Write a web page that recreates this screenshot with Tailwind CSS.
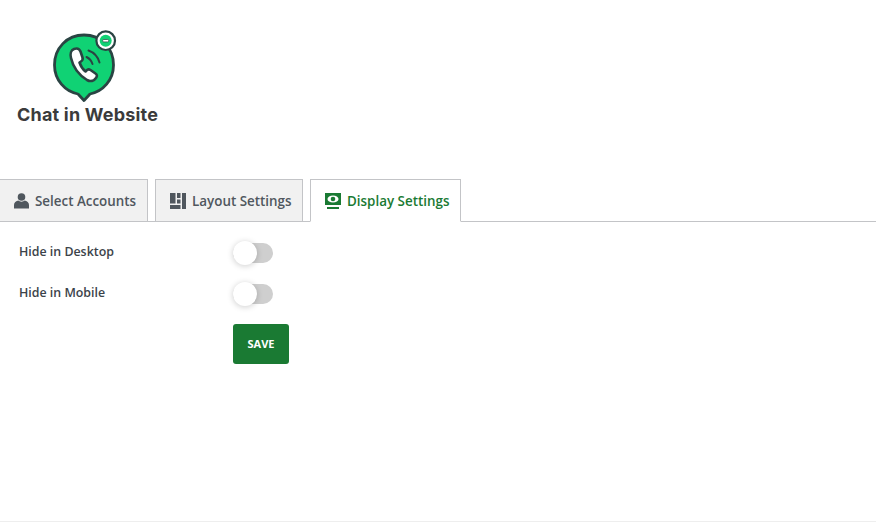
<!DOCTYPE html>
<html lang="en">
<head>
  <meta charset="UTF-8" />
  <title>Chat in Website</title>
  <script src="https://cdn.jsdelivr.net/npm/@tailwindcss/browser@4"></script>
</head>
<body class="bg-white font-['Open_Sans',sans-serif]">
  <div class="h-[522px] overflow-hidden flex flex-col border-b border-[#eeeeee]">
    <!-- Logo -->
    <div class="h-[179px] pl-[17px] pt-[30px] shrink-0">
      <div class="w-[141px] flex flex-col items-start">
        <svg width="68" height="73" viewBox="0 0 68 73" class="ml-[35px]">
          <path d="M32 5C15 5 2.500 18 2.500 35C2.500 50 13 61.500 26 64L32 70.500L38 64C51 61.500 61.500 50 61.500 35C61.500 18 49 5 32 5Z" fill="#10d274" stroke="#2a4443" stroke-width="2.800" stroke-linejoin="round"/>
          <path d="M22 19C19 20 18 24 19 28C21 37 27 45 35 50C38.500 52 42 51 44 48C45.500 46 45 44.500 43.500 43.500L38.500 40C37 39 35.500 39.300 34.500 40.500L33.500 41.500C31 39.500 28.500 35.500 27.500 32.500L29 31.500C30.500 30.500 31 29 30.500 27.500L28.500 21.500C27.500 19 25 18 22 19Z" fill="#ffffff" stroke="#2a4443" stroke-width="2.600" stroke-linejoin="round"/>
          <path d="M34.500 27C37.500 28.500 39.500 31 40.500 34" fill="none" stroke="#2a4443" stroke-width="2" stroke-linecap="round"/>
          <path d="M36.500 20.500C42 22.500 46 27 47.500 32.500" fill="none" stroke="#2a4443" stroke-width="2" stroke-linecap="round"/>
          <circle cx="53.700" cy="10.700" r="9.300" fill="#ffffff" stroke="#2a4443" stroke-width="2.200"/>
          <circle cx="53.700" cy="10.700" r="6" fill="#10d274"/>
          <rect x="50.700" y="9.500" width="6" height="2.400" rx="1" fill="#ffffff" stroke="#2a4443" stroke-width="0.700"/>
        </svg>
        <div class="mt-[1px] font-['Inter',sans-serif] font-bold text-[18px] tracking-[0.2px] leading-[22px] text-[#3b3b3b] whitespace-nowrap">Chat in Website</div>
      </div>
    </div>

    <!-- Tabs -->
    <div class="h-[43px] shrink-0 flex items-stretch gap-[7px] border-b border-[#c3c4c7] text-[13.400px] font-semibold">
      <div class="w-[148px] h-[43px] flex items-center pl-[14px] gap-[6px] bg-[#f1f1f1] border border-l-0 border-[#c3c4c7] text-[#50575e]">
        <svg width="15" height="16" viewBox="0 0 15 16" fill="#50575e">
          <circle cx="7.500" cy="4" r="3.800"/>
          <path d="M0 15.500V12C0 9.500 2 8 4.500 7.500C5.500 9 9.500 9 10.500 7.500C13 8 15 9.500 15 12V15.500Z"/>
        </svg>
        <span class="pt-[2px]">Select Accounts</span>
      </div>
      <div class="w-[148px] h-[43px] flex items-center pl-[14px] gap-[6px] bg-[#f1f1f1] border border-[#c3c4c7] text-[#50575e]">
        <svg width="16" height="16" viewBox="0 0 16 16" fill="#50575e">
          <path d="M0 0H5.500V10.500H0ZM7 0H10.500V5H7ZM12 0H16V16H12ZM7 6.500H10.500V10.500H7ZM0 12H10.500V16H0Z"/>
        </svg>
        <span class="pt-[2px]">Layout Settings</span>
      </div>
      <div class="w-[151px] h-[43px] flex items-center pl-[14px] gap-[6px] bg-white border border-b-white border-[#c3c4c7] text-[#1a7a33]">
        <svg width="16" height="16" viewBox="0 0 16 16">
          <rect x="0" y="0" width="16" height="12" fill="#1a7a33"/>
          <rect x="2" y="14" width="12" height="2" fill="#1a7a33"/>
          <ellipse cx="8" cy="6" rx="5.500" ry="3.600" fill="#ffffff"/>
          <circle cx="8" cy="6" r="2.300" fill="#1a7a33"/>
        </svg>
        <span class="pt-[2px]">Display Settings</span>
      </div>
    </div>

    <!-- Settings form -->
    <div class="pl-[19px] text-[12.400px] font-semibold text-[#3c434a]">
      <div class="h-[41px] mt-[10px] flex items-start">
        <span class="w-[214px] leading-[18px] mt-[11px]">Hide in Desktop</span>
        <div class="relative w-[40px] h-[20px] mt-[11px] rounded-full bg-[#cfcfcf]">
          <div class="absolute left-0 -top-[2px] w-[24px] h-[24px] rounded-full bg-white shadow-[0_1px_6px_rgba(0,0,0,0.2)]"></div>
        </div>
      </div>
      <div class="h-[41px] flex items-start">
        <span class="w-[214px] leading-[18px] mt-[11px]">Hide in Mobile</span>
        <div class="relative w-[40px] h-[20px] mt-[11px] rounded-full bg-[#cfcfcf]">
          <div class="absolute left-0 -top-[2px] w-[24px] h-[24px] rounded-full bg-white shadow-[0_1px_6px_rgba(0,0,0,0.2)]"></div>
        </div>
      </div>
      <div class="pl-[214px] mt-[10px]">
        <button class="w-[56px] h-[40px] rounded-[3px] bg-[#1a7a33] text-white text-[11px] font-bold">SAVE</button>
      </div>
    </div>
  </div>
</body>
</html>
